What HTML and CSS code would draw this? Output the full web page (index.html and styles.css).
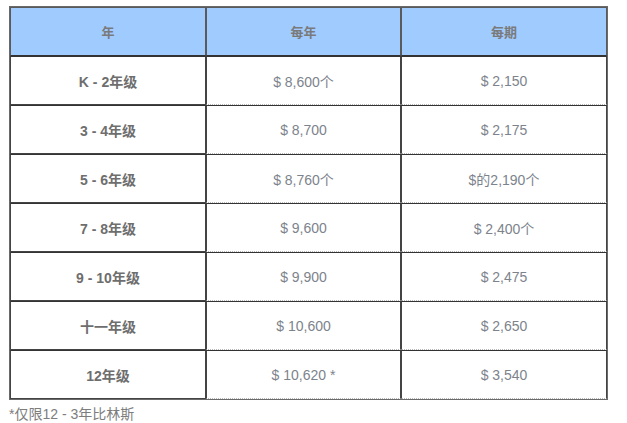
FILE: index.html
```html
<!DOCTYPE html>
<html lang="zh">
<head>
<meta charset="utf-8">
<link rel="stylesheet" href="styles.css">
</head>
<body>
<table class="fees">
  <colgroup>
    <col class="c1"><col class="c2"><col class="c3">
  </colgroup>
  <thead>
    <tr><th>年</th><th>每年</th><th>每期</th></tr>
  </thead>
  <tbody>
    <tr><td class="grade">K - 2年级</td><td>$ 8,600个</td><td>$ 2,150</td></tr>
    <tr><td class="grade">3 - 4年级</td><td>$ 8,700</td><td>$ 2,175</td></tr>
    <tr><td class="grade">5 - 6年级</td><td>$ 8,760个</td><td>$的2,190个</td></tr>
    <tr><td class="grade">7 - 8年级</td><td>$ 9,600</td><td>$ 2,400个</td></tr>
    <tr><td class="grade">9 - 10年级</td><td>$ 9,900</td><td>$ 2,475</td></tr>
    <tr><td class="grade">十一年级</td><td>$ 10,600</td><td>$ 2,650</td></tr>
    <tr><td class="grade">12年级</td><td>$ 10,620 *</td><td>$ 3,540</td></tr>
  </tbody>
</table>
<p class="note">*仅限12 - 3年比林斯</p>
</body>
</html>
```

FILE: styles.css
```css
html, body {
  margin: 0;
  padding: 0;
  background: #fff;
}
body {
  font-family: "Liberation Sans", Arial, "Noto Sans CJK SC", sans-serif;
  font-size: 14px;
  color: #7b8088;
}
.fees {
  margin: 6px 0 0 9px;
  width: 599px;
  border-collapse: separate;
  border-spacing: 0;
  border: 1px solid #6a6a6a;
  table-layout: fixed;
}
.c1 { width: 196px; }
.c2 { width: 195px; }
.c3 { width: 206px; }
.fees th {
  height: 47px;
  padding: 0;
  background: #a0cbff;
  color: #7a7a7a;
  font-weight: bold;
  font-size: 13px;
  text-align: center;
  vertical-align: middle;
  border: 1px solid #5a5a5a;
  border-bottom-color: #333;
}
.fees td {
  height: 47px;
  padding: 0;
  text-align: center;
  vertical-align: middle;
  border-left: 1px solid #444;
  border-right: 1px solid #444;
  border-top: 1px solid #333;
  border-bottom: 1px dotted #b8b8b8;
  color: #7d838c;
}
.fees td.grade {
  font-weight: bold;
  color: #6e6e6e;
  border-bottom: 1px solid #444;
}
.note {
  margin: 3px 0 0 9px;
  color: #7d7d7d;
  font-size: 14px;
}
```
